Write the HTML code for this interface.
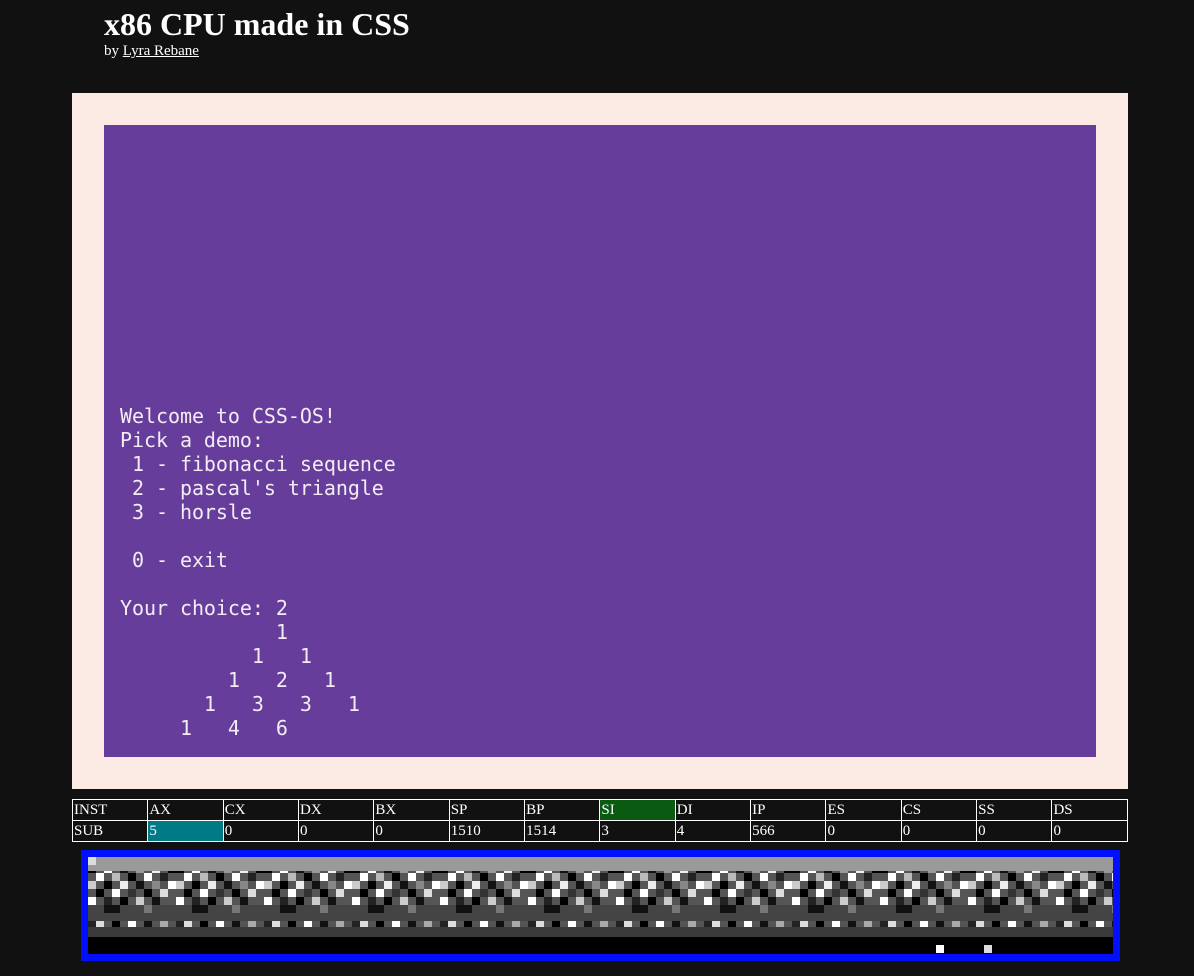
<!DOCTYPE html>
<html><head><meta charset="utf-8"><style>
body{margin:0;background:#111;width:1194px;height:976px;overflow:hidden;position:relative;font-family:"Liberation Serif",serif;color:#fff}
h1{position:absolute;left:104px;top:4px;margin:0;font-size:32px;font-weight:bold;line-height:40px}
.by{position:absolute;left:104px;top:43px;font-size:15px}
.by a{color:#fff}
.screen{position:absolute;left:72px;top:93px;width:1056px;height:696px;background:#fcebe4}
.inner{position:absolute;left:32px;top:32px;width:992px;height:632px;background:#673d9b}
pre{position:absolute;left:16px;top:279px;margin:0;font-family:"DejaVu Sans Mono",monospace;font-size:20px;line-height:24px;color:#f4ecf4;letter-spacing:-0.05px}
table{position:absolute;left:72px;top:799px;width:1056px;border-collapse:collapse;font-size:15px;table-layout:fixed}
td{border:1px solid #fff;height:20px;padding:0 1px;line-height:20px;overflow:hidden}
.mem{position:absolute;left:81px;top:850px;width:1025px;height:97px;border:7px solid #0010ff;background:#000}
</style></head><body>
<h1>x86 CPU made in CSS</h1>
<div class="by">by <a href="#">Lyra Rebane</a></div>
<div class="screen"><div class="inner"><pre>Welcome to CSS-OS!
Pick a demo:
 1 - fibonacci sequence
 2 - pascal's triangle
 3 - horsle

 0 - exit

Your choice: 2
             1
           1   1
         1   2   1
       1   3   3   1
     1   4   6</pre></div></div>
<table>
<tr><td>INST</td><td>AX</td><td>CX</td><td>DX</td><td>BX</td><td>SP</td><td>BP</td><td style="background:#0a5a12">SI</td><td>DI</td><td>IP</td><td>ES</td><td>CS</td><td>SS</td><td>DS</td></tr>
<tr><td>SUB</td><td style="background:#007a85">5</td><td>0</td><td>0</td><td>0</td><td>1510</td><td>1514</td><td>3</td><td>4</td><td>566</td><td>0</td><td>0</td><td>0</td><td>0</td></tr>
</table>
<div class="mem"><svg width="1025" height="97">
<defs><pattern id="p" width="88" height="64" patternUnits="userSpaceOnUse">
<rect width="88" height="64" fill="#555"/>
<rect x="0" y="0" width="8" height="8" fill="#222"/><rect x="8" y="0" width="8" height="8" fill="#ddd"/><rect x="24" y="0" width="8" height="8" fill="#000"/><rect x="40" y="0" width="8" height="8" fill="#fff"/><rect x="56" y="0" width="8" height="8" fill="#111"/><rect x="72" y="0" width="8" height="8" fill="#aaa"/>
<rect x="0" y="8" width="8" height="8" fill="#000"/><rect x="16" y="8" width="8" height="8" fill="#fff"/><rect x="32" y="8" width="8" height="8" fill="#111"/><rect x="48" y="8" width="8" height="8" fill="#999"/><rect x="64" y="8" width="8" height="8" fill="#eee"/><rect x="80" y="8" width="8" height="8" fill="#000"/>
<rect x="8" y="16" width="8" height="8" fill="#fff"/><rect x="24" y="16" width="8" height="8" fill="#bbb"/><rect x="40" y="16" width="8" height="8" fill="#000"/><rect x="56" y="16" width="8" height="8" fill="#fff"/><rect x="72" y="16" width="8" height="8" fill="#222"/>
<rect x="0" y="24" width="8" height="8" fill="#ccc"/><rect x="16" y="24" width="8" height="8" fill="#000"/><rect x="32" y="24" width="8" height="8" fill="#eee"/><rect x="48" y="24" width="8" height="8" fill="#111"/><rect x="64" y="24" width="8" height="8" fill="#888"/><rect x="80" y="24" width="8" height="8" fill="#fff"/>
<rect x="8" y="32" width="8" height="8" fill="#000"/><rect x="24" y="32" width="8" height="8" fill="#fff"/><rect x="40" y="32" width="8" height="8" fill="#333"/><rect x="56" y="32" width="8" height="8" fill="#000"/><rect x="72" y="32" width="8" height="8" fill="#ddd"/>
<rect x="0" y="40" width="8" height="8" fill="#fff"/><rect x="16" y="40" width="8" height="8" fill="#222"/><rect x="32" y="40" width="8" height="8" fill="#000"/><rect x="48" y="40" width="8" height="8" fill="#ccc"/><rect x="64" y="40" width="8" height="8" fill="#111"/>
<rect x="0" y="48" width="88" height="16" fill="#444"/><rect x="16" y="48" width="16" height="8" fill="#111"/><rect x="56" y="48" width="8" height="8" fill="#777"/>
</pattern></defs>
<rect x="0" y="0" width="1025" height="14" fill="#9a9a9a"/>
<rect x="0" y="0" width="8" height="8" fill="#ddd"/>
<rect x="0" y="14" width="1025" height="64" fill="url(#p)"/>
<rect x="0" y="70" width="1025" height="10" fill="#3a3a3a"/>
<rect x="0" y="80" width="1025" height="17" fill="#000"/>
<rect x="848" y="88" width="8" height="8" fill="#fff"/><rect x="896" y="88" width="8" height="8" fill="#ddd"/>
</svg></div>
</body></html>
